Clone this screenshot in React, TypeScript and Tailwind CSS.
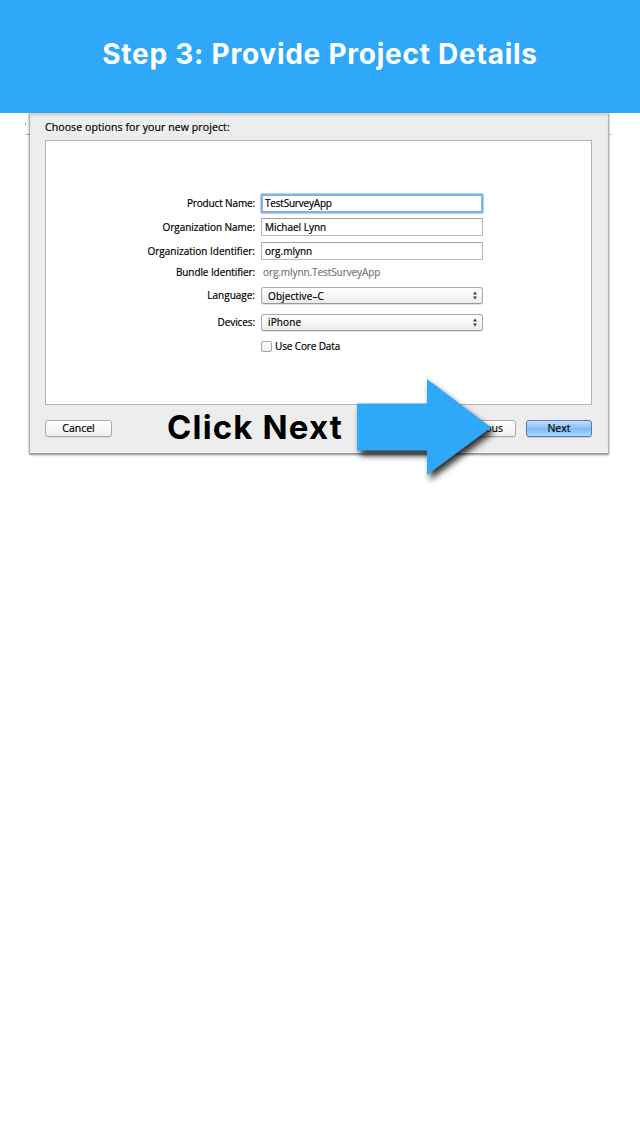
import type { ReactNode } from "react";

function Row({ label, labelClass, className, children }: { label: string; labelClass: string; className: string; children: ReactNode }) {
  return (
    <div className={`flex items-center ${className}`}>
      <div className="flex w-[209px] shrink-0 justify-end">
        <span className={labelClass}>{label}</span>
      </div>
      {children}
    </div>
  );
}

function Select({ value, textClass }: { value: string; textClass: string }) {
  return (
    <div className="ml-[6px] flex h-[17px] w-[222px] items-center justify-between rounded-[3px] border border-[#a9a9a9] border-b-[#999] bg-linear-to-b from-white via-[#f7f7f7] via-50% to-[#ececec] pr-[5px] pl-[6px] shadow-[0_1px_0_#e4e4e4]">
      <span className={textClass}>{value}</span>
      <svg width="4" height="9" viewBox="0 0 4 9" fill="#3c3c3c">
        <path d="M2 .5 4 3.500H0zM2 8.500 0 5.500h4z" />
      </svg>
    </div>
  );
}

export default function App() {
  return (
    <div className="flex h-[1136px] w-[640px] flex-col overflow-hidden bg-white font-['Open_Sans','Noto_Sans',sans-serif] text-[10px] leading-[14px] font-medium whitespace-nowrap text-black [-webkit-text-stroke:0.2px]">
      <header className="z-10 flex h-[113px] shrink-0 items-start justify-center bg-[#30a8f9] pt-[37px]">
        <h1 className="font-['Inter',sans-serif] text-[28px] leading-[34px] font-bold tracking-[0.75px] text-white [-webkit-text-stroke:0px]">Step 3: Provide Project Details</h1>
      </header>

      <main className="relative flex h-[380px] shrink-0 items-start">
        <div className="mt-[10px] flex h-[12px] w-[30px] shrink-0 flex-col items-end justify-between">
          <span className="mr-[4px] h-[2px] w-px bg-[#999]" />
          <span className="h-px w-[5px] bg-[#bbb]" />
        </div>
        <section className="flex h-[340px] w-[578px] shrink-0 flex-col border-b border-[#f7f7f7] bg-[#ededed] px-[15px] pt-[7px] shadow-[0_1px_2px_1px_rgba(0,0,0,0.45),inset_0_3px_3px_-1px_rgba(0,0,0,0.15)]">
          <h2 className="h-[20px] text-[10.500px] leading-[15px] tracking-[0.1px]">Choose options for your new project:</h2>
          <div className="flex h-[265px] w-[547px] shrink-0 flex-col border border-[#b4b4b4] bg-white pt-[52px]">
            <Row label="Product Name:" labelClass="tracking-[-0.14px] -mt-px" className="h-[21px]">
              <div className="ml-[6px] flex h-[19px] w-[222px] items-center rounded-[1px] border-2 border-[#82b1e0] bg-white pb-px pl-[2px] shadow-[0_0_1px_1px_#b3d0ec]">
                <span className="tracking-[-0.2px]">TestSurveyApp</span>
              </div>
            </Row>
            <Row label="Organization Name:" labelClass="tracking-[-0.04px]" className="mt-[4px] h-[18px]">
              <div className="ml-[6px] flex h-[18px] w-[222px] items-center border border-[#b8b8b8] border-t-[#a0a0a0] bg-white pl-[3px]">
                <span>Michael Lynn</span>
              </div>
            </Row>
            <Row label="Organization Identifier:" labelClass="tracking-[0px]" className="mt-[6px] h-[18px]">
              <div className="ml-[6px] flex h-[18px] w-[222px] items-center border border-[#b8b8b8] border-t-[#a0a0a0] bg-white pl-[3px]">
                <span>org.mlynn</span>
              </div>
            </Row>
            <Row label="Bundle Identifier:" labelClass="tracking-[-0.08px]" className="mt-[4px] h-[15px]">
              <span className="ml-[8px] tracking-[-0.08px] text-[#777]">org.mlynn.TestSurveyApp</span>
            </Row>
            <Row label="Language:" labelClass="tracking-[0px] -mt-px" className="mt-[8px] h-[17px]">
              <Select value="Objective–C" textClass="tracking-[0.1px]" />
            </Row>
            <Row label="Devices:" labelClass="tracking-[-0.1px] -mt-px" className="mt-[10px] h-[17px]">
              <Select value="iPhone" textClass="tracking-[0.15px] -mt-px" />
            </Row>
            <Row label="" labelClass="" className="mt-[8px] h-[14px]">
              <span className="ml-[6px] h-[11px] w-[11px] rounded-[2px] border border-[#a5a5a5] bg-linear-to-b from-white to-[#eee]" />
              <span className="ml-[3px] tracking-[-0.13px]">Use Core Data</span>
            </Row>
          </div>
          <footer className="mt-[15px] flex h-[17px] w-[547px] shrink-0 items-center">
            <button className="flex h-[17px] w-[67px] items-center justify-center rounded-[3px] border border-[#aaa] bg-linear-to-b from-white to-[#f0f0f0] pb-px text-[10.500px] shadow-[0_1px_0_#ddd]">Cancel</button>
            <button className="ml-auto flex h-[17px] w-[66px] items-center justify-end rounded-[3px] border border-[#aaa] bg-linear-to-b from-white to-[#f0f0f0] pr-[12px] pb-px text-[10.500px] shadow-[0_1px_0_#ddd]">Previous</button>
            <button className="ml-[10px] flex h-[17px] w-[66px] items-center justify-center rounded-[3px] border border-[#5778b5] bg-linear-to-b from-[#c3defa] via-[#83baf2] via-55% to-[#a9dcff] pb-px text-[10.500px] shadow-[0_1px_0_#ccc]">Next</button>
          </footer>
        </section>
        <span className="mt-[21px] h-px w-[4px] bg-[#bbb]" />

        <div className="absolute top-[266px] left-[167px] flex items-start">
          <span className="w-[190px] pt-[28px] font-['Inter',sans-serif] text-[33px] leading-[40px] font-bold tracking-[1.15px] text-black [-webkit-text-stroke:0px]">Click Next</span>
          <svg className="overflow-visible drop-shadow-[3px_5px_3px_rgba(0,0,0,0.8)]" width="136" height="97" viewBox="0 0 136 97" fill="#30a8f9">
            <path d="M0 24.500H70V0L134 48.500 70 96V71.500H0z" />
          </svg>
        </div>
      </main>
    </div>
  );
}
